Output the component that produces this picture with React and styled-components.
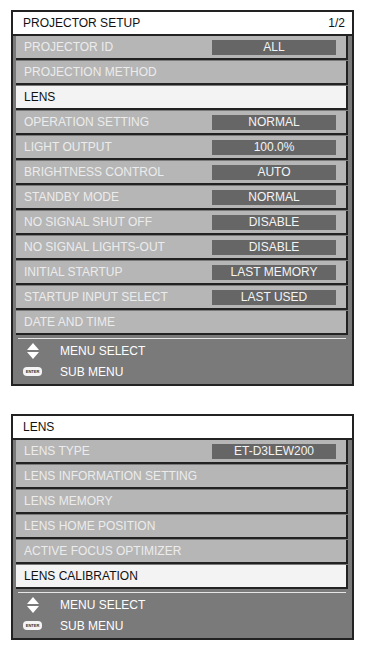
import styled, { createGlobalStyle } from "styled-components";

const GlobalStyle = createGlobalStyle`
  body {
    margin: 0;
    background: #ffffff;
    font-family: "Liberation Sans", Arial, sans-serif;
  }
`;

const Page = styled.div`
  display: flex;
  flex-direction: column;
  gap: 28px;
  padding: 10px 0 0 11px;
`;

const Panel = styled.div`
  width: 339px;
  border: 2px solid #222;
  background: #7a7a7a;
`;

const TitleBar = styled.div`
  height: 22px;
  display: flex;
  align-items: center;
  justify-content: space-between;
  padding: 0 7px 0 10px;
  background: #fff;
  border-bottom: 2px solid #222;
  color: #111;
  font-size: 12px;
`;

const List = styled.div`
  display: flex;
  flex-direction: column;
  padding: 0 4px 0 3px;
`;

const Row = styled.div`
  height: 22px;
  display: grid;
  grid-template-columns: 1fr 124px;
  align-items: center;
  padding: 0 10px 0 8px;
  margin-bottom: 1px;
  background: ${(p) => (p.$active ? "#f3f3f3" : "#b6b6b6")};
  border-right: 2px solid #222;
  border-bottom: 2px solid #222;
  color: ${(p) => (p.$active ? "#111" : "#ececec")};
  font-size: 12px;
  white-space: nowrap;
`;

const Value = styled.div`
  height: 15px;
  line-height: 15px;
  background: #666;
  color: #f4f4f4;
  font-size: 12px;
  text-align: center;
`;

const Footer = styled.div`
  margin: 2px 6px 0 5px;
  padding: 1px 0 2px;
  border-top: 1px solid #e6e6e6;
  display: flex;
  flex-direction: column;
`;

const FooterItem = styled.div`
  height: 21px;
  display: flex;
  align-items: center;
  color: #fff;
  font-size: 12px;
`;

const IconSlot = styled.div`
  width: 37px;
  padding-left: 5px;
  display: flex;
  align-items: center;
`;

const EnterKey = styled.span`
  width: 19px;
  height: 9px;
  border-radius: 4px;
  background: #f4f4f4;
  color: #333;
  font-size: 4px;
  font-weight: bold;
  display: flex;
  align-items: center;
  justify-content: center;
`;

const ArrowsIcon = () => (
  <svg width="14" height="16" viewBox="0 0 14 16" style={{ marginLeft: 3 }}>
    <polygon points="7,0 13,7 1,7" fill="#fff" />
    <polygon points="1,9 13,9 7,16" fill="#fff" />
  </svg>
);

const MenuFooter = () => (
  <Footer>
    <FooterItem>
      <IconSlot>
        <ArrowsIcon />
      </IconSlot>
      MENU SELECT
    </FooterItem>
    <FooterItem>
      <IconSlot>
        <EnterKey>ENTER</EnterKey>
      </IconSlot>
      SUB MENU
    </FooterItem>
  </Footer>
);

const setupItems = [
  ["PROJECTOR ID", "ALL"],
  ["PROJECTION METHOD"],
  ["LENS", null, true],
  ["OPERATION SETTING", "NORMAL"],
  ["LIGHT OUTPUT", "100.0%"],
  ["BRIGHTNESS CONTROL", "AUTO"],
  ["STANDBY MODE", "NORMAL"],
  ["NO SIGNAL SHUT OFF", "DISABLE"],
  ["NO SIGNAL LIGHTS-OUT", "DISABLE"],
  ["INITIAL STARTUP", "LAST MEMORY"],
  ["STARTUP INPUT SELECT", "LAST USED"],
  ["DATE AND TIME"],
];

const lensItems = [
  ["LENS TYPE", "ET-D3LEW200"],
  ["LENS INFORMATION SETTING"],
  ["LENS MEMORY"],
  ["LENS HOME POSITION"],
  ["ACTIVE FOCUS OPTIMIZER"],
  ["LENS CALIBRATION", null, true],
];

const Menu = ({ title, page, items }) => (
  <Panel>
    <TitleBar>
      <span>{title}</span>
      {page && <span>{page}</span>}
    </TitleBar>
    <List>
      {items.map(([label, value, active]) => (
        <Row key={label} $active={active}>
          <span>{label}</span>
          {value && <Value>{value}</Value>}
        </Row>
      ))}
    </List>
    <MenuFooter />
  </Panel>
);

const App = () => (
  <>
    <GlobalStyle />
    <Page>
      <Menu title="PROJECTOR SETUP" page="1/2" items={setupItems} />
      <Menu title="LENS" items={lensItems} />
    </Page>
  </>
);

export default App;
